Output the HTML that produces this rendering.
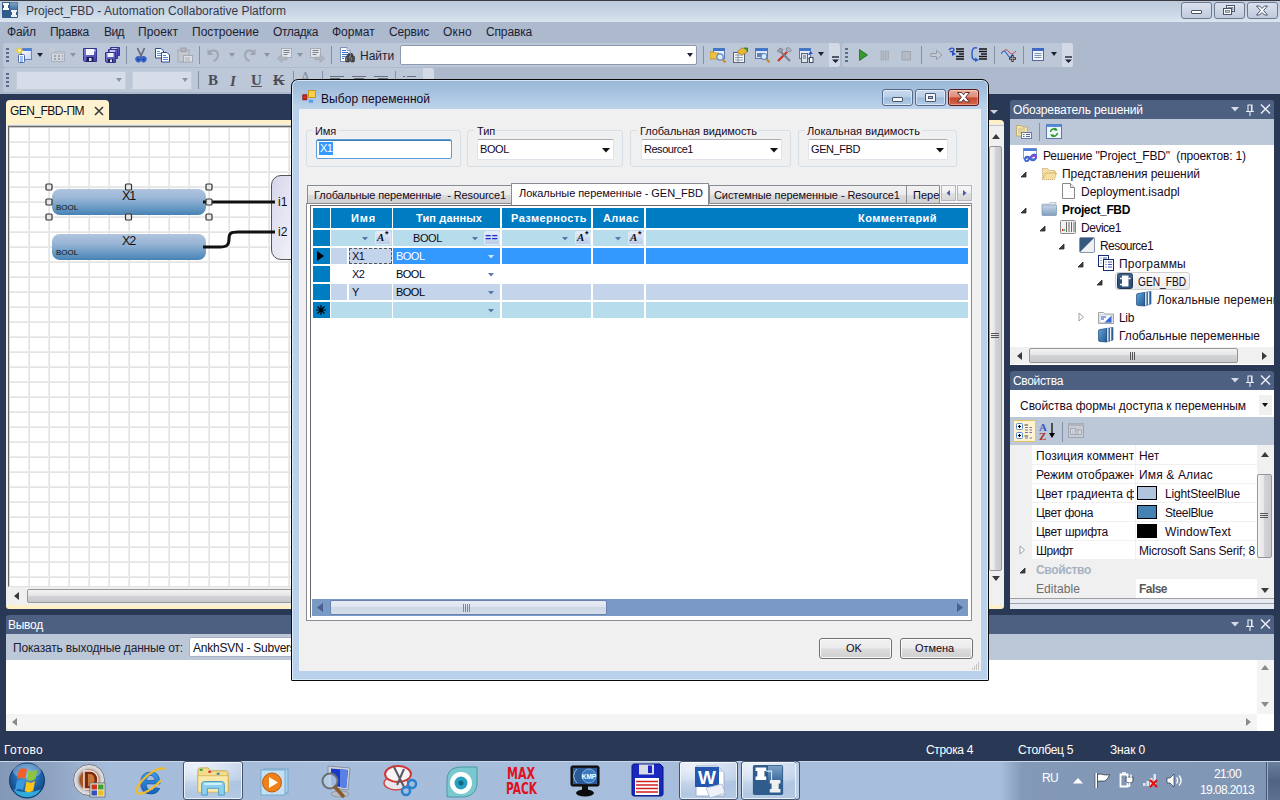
<!DOCTYPE html>
<html lang="ru">
<head>
<meta charset="utf-8">
<title>Project_FBD - Automation Collaborative Platform</title>
<style>
*{box-sizing:border-box;margin:0;padding:0}
html,body{width:1280px;height:800px;overflow:hidden}
body{position:relative;background:#293955;font-family:"Liberation Sans","DejaVu Sans",sans-serif;font-size:12px;color:#000}
.a{position:absolute}
.t{position:absolute;white-space:pre;line-height:1}
/* ---- main window chrome ---- */
#titlebar{left:0;top:0;width:1280px;height:22px;background:linear-gradient(#bccadb 0,#c8d4e3 50%,#dae5f1 100%);border-top:1px solid #3a3a40}
#menubar{left:0;top:22px;width:1280px;height:72px;background:#adb9cd}
.tb{background:#bcc7d8;border-radius:3px}
.wbtn{border:1px solid #6d7a90;border-radius:3px;background:linear-gradient(#dbe2ee,#bfcadb);height:17px;width:31px;top:2px}
.sep{width:1px;background:#8591a8}
.mi{top:26px;font-size:12px;color:#1b2234}

.grip{width:3px;height:15px;background:repeating-linear-gradient(#5a6a8a 0,#5a6a8a 2px,transparent 2px,transparent 4px)}
.dd{width:0;height:0;border-left:3.5px solid transparent;border-right:3.5px solid transparent;border-top:4px solid #1b2234}
.dd.g{border-top-color:#8c94a3}
.ovf{background:#d3dae6;border-radius:0 3px 3px 0}
.combo{background:#d7dde8;border:1px solid #c5cddb;border-radius:1px}
.ic{position:absolute;width:16px;height:16px}
.blk{width:154px;height:26px;border-radius:8px;background:linear-gradient(#b0c4de 0,#9ab6d6 35%,#6d9cc6 70%,#4682b4 100%)}
/* ---- panels ---- */
.ptitle{background:#4d6082;color:#fff;height:19px}
.white{background:#fff}
</style>
</head>
<body>
<!-- TITLE BAR -->
<div id="titlebar" class="a"></div>
<div class="t" style="left:26px;top:5px;font-size:12px;color:#33394d">Project_FBD - Automation Collaborative Platform</div>
<!-- MENU + TOOLBARS -->
<div id="menubar" class="a"></div>
<div id="menu"><div class="t mi" style="left:7px;letter-spacing:-0.13px">Файл</div><div class="t mi" style="left:50px;letter-spacing:-0.26px">Правка</div><div class="t mi" style="left:104px;letter-spacing:-0.57px">Вид</div><div class="t mi" style="left:138px;letter-spacing:0.08px">Проект</div><div class="t mi" style="left:192px">Построение</div><div class="t mi" style="left:273px;letter-spacing:-0.35px">Отладка</div><div class="t mi" style="left:332px">Формат</div><div class="t mi" style="left:389px;letter-spacing:-0.18px">Сервис</div><div class="t mi" style="left:443px;letter-spacing:0.28px">Окно</div><div class="t mi" style="left:486px;letter-spacing:-0.15px">Справка</div></div>

<div class="a tb" style="left:3px;top:43px;width:837px;height:24px"></div>
<div class="a ovf" style="left:829px;top:43px;width:11px;height:24px"></div>
<div class="a tb" style="left:842px;top:43px;width:231px;height:24px"></div>
<div class="a ovf" style="left:1062px;top:43px;width:11px;height:24px"></div>
<div class="a tb" style="left:3px;top:68px;width:431px;height:24px"></div>
<div class="a ovf" style="left:423px;top:68px;width:11px;height:24px"></div>
<div class="a grip" style="left:6px;top:48px"></div>
<div class="a grip" style="left:6px;top:73px"></div>
<div class="a grip" style="left:845px;top:48px"></div>
<!--ICONS1-->
<div class="a sep" style="left:126px;top:46px;height:18px"></div>
<div class="a sep" style="left:199px;top:46px;height:18px"></div>
<div class="a sep" style="left:331px;top:46px;height:18px"></div>
<div class="a sep" style="left:703px;top:46px;height:18px"></div>
<div class="a sep" style="left:921px;top:46px;height:18px"></div>
<div class="a sep" style="left:994px;top:46px;height:18px"></div>
<div class="a sep" style="left:1023px;top:46px;height:18px"></div>
<div class="a sep" style="left:198px;top:71px;height:18px"></div>
<div class="a sep" style="left:293px;top:71px;height:18px"></div>
<div class="a sep" style="left:322px;top:71px;height:18px"></div><div class="a sep" style="left:395px;top:71px;height:18px"></div>
<div class="a dd" style="left:37px;top:53px"></div>
<div class="a dd g" style="left:70px;top:53px"></div>
<div class="a dd g" style="left:229px;top:53px"></div>
<div class="a dd g" style="left:264px;top:53px"></div>
<div class="a dd g" style="left:297px;top:53px"></div>
<div class="a dd" style="left:818px;top:52px"></div>
<div class="a dd" style="left:1051px;top:52px"></div>
<div class="a combo" style="left:16px;top:71px;width:110px;height:19px"></div>
<div class="a dd g" style="left:116px;top:78px"></div>
<div class="a combo" style="left:132px;top:71px;width:60px;height:19px"></div>
<div class="a dd g" style="left:182px;top:78px"></div>
<div class="a white" style="left:400px;top:45px;width:297px;height:20px;border:1px solid #8d99b0;border-radius:2px"></div>
<div class="a dd" style="left:687px;top:53px"></div>
<div class="t" style="left:360px;top:50px;font-size:12px;color:#1b2234">Найти</div>
<div class="t" style="left:208px;top:72px;font:bold 15px 'Liberation Serif',serif;color:#4d4d55">B</div>
<div class="t" style="left:230px;top:73px;font:italic bold 15px 'Liberation Serif',serif;color:#4d4d55">I</div>
<div class="t" style="left:251px;top:72px;font:bold 15px 'Liberation Serif',serif;color:#4d4d55;text-decoration:underline">U</div>
<div class="t" style="left:273px;top:72px;font:bold 15px 'Liberation Serif',serif;color:#4d4d55;text-decoration:line-through">K</div>

<!-- toolbar icons -->
<svg class="ic" style="left:16px;top:47px" viewBox="0 0 16 16"><defs><linearGradient id="npw" x1="0" y1="0" x2="1" y2="1"><stop offset="0" stop-color="#fff"/><stop offset="1" stop-color="#c4d6f2"/></linearGradient><linearGradient id="svg1" x1="0" y1="0" x2="1" y2="1"><stop offset="0" stop-color="#8080dc"/><stop offset="1" stop-color="#4040a8"/></linearGradient></defs><rect x="5.5" y="1.5" width="10" height="11" fill="url(#npw)" stroke="#6a86b8"/><rect x="5.5" y="1.5" width="10" height="2.5" fill="#4a80e0"/><path d="M3.5 0v7.5M0 3.5h7M1 1l5 5M6 1l-5 5" stroke="#f6cc1c" stroke-width="1.3"/><circle cx="3.5" cy="3.5" r="1.5" fill="#fff6b0"/><rect x="2.5" y="7.5" width="6" height="8" rx="1" fill="#fff" stroke="#4a68a8"/><path d="M4 10h3M4 12h3M4 14h3" stroke="#4a80e0" stroke-width="1.2"/></svg>
<svg class="ic" style="left:49px;top:47px" viewBox="0 0 16 16"><rect x="2.5" y="4.5" width="13" height="10" fill="#d2d6dd" stroke="#a9afba"/><rect x="2.5" y="4.5" width="13" height="2.5" fill="#bcc2cc"/><path d="M5 9h2M9 9h2M13 9h1M5 12h2M9 12h2M13 12h1" stroke="#8e95a2" stroke-width="1.5"/><path d="M3 0v6M0 3h6M1 1l4 4M5 1l-4 4" stroke="#c9ccd2" stroke-width="1"/></svg>
<svg class="ic" style="left:82px;top:47px" viewBox="0 0 16 16"><path d="M1.5 1.5h13v13h-12l-1-1z" fill="url(#svg1)" stroke="#34348c"/><rect x="4" y="2" width="8" height="6" fill="#f4f6fc"/><rect x="12" y="2.5" width="1.5" height="2" fill="#c8c8f0"/><rect x="4.5" y="10" width="7" height="4.5" fill="#1c1c50"/><rect x="7" y="11" width="2.5" height="3" fill="#dcdcf0"/></svg>
<svg class="ic" style="left:104px;top:47px" viewBox="0 0 16 16"><path d="M6.5 .5h9v8h-9z" fill="url(#svg1)" stroke="#34348c"/><path d="M8 2h5" stroke="#e8e8fa" stroke-width="1.4"/><path d="M4.5 2.5h9v9h-9z" fill="url(#svg1)" stroke="#34348c"/><path d="M6 4h5" stroke="#e8e8fa" stroke-width="1.4"/><path d="M1.5 5.5h10v10h-9l-1-1z" fill="url(#svg1)" stroke="#34348c"/><rect x="3.5" y="6" width="6" height="4" fill="#f0f2fa"/><rect x="4" y="12" width="5" height="3" fill="#1c1c50"/><rect x="6" y="12.5" width="2" height="2.5" fill="#dcdcf0"/></svg>
<svg class="ic" style="left:133px;top:47px" viewBox="0 0 16 16"><path d="M4.5 1l4.5 10M11.5 1l-4.5 10" stroke="#6a6f7c" stroke-width="1.8" fill="none"/><ellipse cx="5.3" cy="12.3" rx="2.6" ry="2.9" fill="#3a6cdc" stroke="#2850b0" stroke-width=".6" transform="rotate(-20 5.3 12.3)"/><ellipse cx="10.7" cy="12.3" rx="2.6" ry="2.9" fill="#3a6cdc" stroke="#2850b0" stroke-width=".6" transform="rotate(20 10.7 12.3)"/><circle cx="5.3" cy="12.6" r="1" fill="#16307a"/><circle cx="10.7" cy="12.6" r="1" fill="#16307a"/></svg>
<svg class="ic" style="left:155px;top:47px" viewBox="0 0 16 16"><path d="M.5 1.5h5.5l2.5 2.5v7h-8z" fill="#fff" stroke="#2a4a9a"/><path d="M2 4.5h3M2 6.5h5M2 8.5h4" stroke="#5a90e0"/><path d="M6.5 5.5h5.5l2.5 2.5v7h-8z" fill="#fff" stroke="#2a4a9a"/><path d="M8 8.5h3M8 10.5h5M8 12.5h5" stroke="#4a80e0"/></svg>
<svg class="ic" style="left:177px;top:47px" viewBox="0 0 16 16"><rect x="1" y="3" width="11" height="12" fill="#c4c7ce" stroke="#a4a8b2"/><rect x="4" y="1" width="5" height="3.5" fill="#b4b8c0" stroke="#9a9ea8"/><rect x="6.5" y="8.5" width="9" height="6.5" fill="#dcdfe4" stroke="#a4a8b2"/><path d="M8 11h5M8 13h5" stroke="#aab"/></svg>
<svg class="ic" style="left:206px;top:47px" viewBox="0 0 16 16"><path d="M3 5.5c3-3.5 9-2.5 9 2.5c0 3-2 5-4.5 6" fill="none" stroke="#a0a6b2" stroke-width="2"/><path d="M1.5 2v6h6z" fill="#a0a6b2"/></svg>
<svg class="ic" style="left:241px;top:47px" viewBox="0 0 16 16"><path d="M13 5.5c-3-3.5-9-2.5-9 2.5c0 3 2 5 4.5 6" fill="none" stroke="#a0a6b2" stroke-width="2"/><path d="M14.5 2v6h-6z" fill="#a0a6b2"/></svg>
<svg class="ic" style="left:277px;top:47px" viewBox="0 0 16 16"><rect x="4.5" y="1.5" width="10" height="9" fill="#e2e5ea" stroke="#a8adb8"/><path d="M6.5 3.5h6M6.5 5.5h6M6.5 7.5h4" stroke="#7d8390"/><path d="M0 11.5l5-4v2.5h5v3h-5v2.5z" fill="#aeb4c0" stroke="#9aa0ac" stroke-width=".5"/></svg>
<svg class="ic" style="left:309px;top:47px" viewBox="0 0 16 16"><rect x="1.5" y="1.5" width="10" height="9" fill="#e2e5ea" stroke="#a8adb8"/><path d="M3.5 3.5h6M3.5 5.5h6M3.5 7.5h4" stroke="#7d8390"/><path d="M16 11.5l-5-4v2.5h-5v3h5v2.5z" fill="#aeb4c0" stroke="#9aa0ac" stroke-width=".5"/></svg>
<svg class="ic" style="left:339px;top:47px" viewBox="0 0 16 16"><path d="M1.5 .5h6.5l3 3v11h-9.5z" fill="#fff" stroke="#7a90b8"/><path d="M8 .5v3h3" fill="#e4ecf8" stroke="#7a90b8" stroke-width=".8"/><path d="M3 3.5h4M3 5.5h6M3 7.5h6M3 9.5h3M3 11.5h2" stroke="#3d74e0"/><path d="M8.5 9l.8-2.5h1.2v2.5M12 9v-2.5h1.2l.8 2.5" fill="#555" stroke="#333" stroke-width=".8"/><rect x="6.5" y="9" width="4" height="6" rx="1.3" fill="#4a4a4a" stroke="#2a2a2a" stroke-width=".6"/><rect x="11.5" y="9" width="4" height="6" rx="1.3" fill="#4a4a4a" stroke="#2a2a2a" stroke-width=".6"/><rect x="10.2" y="9.5" width="1.6" height="2" fill="#777"/><path d="M7.5 10.5v3M12.5 10.5v3" stroke="#8a8a8a" stroke-width=".8"/></svg>
<!-- right group of tb1 -->
<svg class="ic" style="left:710px;top:47px" viewBox="0 0 16 16"><rect x="3.5" y="1.5" width="11" height="10" fill="#e8eef8" stroke="#5a78a8"/><rect x="3.5" y="1.5" width="11" height="2.5" fill="#3d74d0"/><path d="M0 5h4l1 1h4v6h-9z" fill="#f0c040" stroke="#b88a18" stroke-width=".7"/><circle cx="10" cy="10" r="3.2" fill="#d8ecfa" stroke="#5a8ac8" stroke-width="1.2"/><path d="M12.5 12.5l3 3" stroke="#c88a30" stroke-width="2"/></svg>
<svg class="ic" style="left:732px;top:47px" viewBox="0 0 16 16"><rect x="1.5" y="5.5" width="11" height="10" fill="#f4f6fa" stroke="#5a6478"/><path d="M3 8h8M3 10.5h8M3 13h8M6 6v9" stroke="#7a869a" stroke-width=".8"/><path d="M5 5l5-4 5 1-1 4-4 2z" fill="#e8b830" stroke="#a87c10" stroke-width=".7"/><path d="M12 1h3.5v4" fill="#4aa040" stroke="#2a7020" stroke-width=".8"/></svg>
<svg class="ic" style="left:754px;top:47px" viewBox="0 0 16 16"><rect x="1.5" y="1.5" width="12" height="10" fill="#dfe8f6" stroke="#5a78a8"/><rect x="1.5" y="1.5" width="12" height="2.5" fill="#3d74d0"/><path d="M3 7h7M3 9h5" stroke="#3d5f9a" stroke-width="1.3"/><circle cx="10" cy="9.5" r="3" fill="#d8ecfa" stroke="#5a8ac8" stroke-width="1.2"/><path d="M12.5 12l3 3.5" stroke="#c88a30" stroke-width="2"/></svg>
<svg class="ic" style="left:776px;top:47px" viewBox="0 0 16 16"><path d="M2 14l9-9" stroke="#d03020" stroke-width="2.2"/><path d="M14 14l-9-9" stroke="#7a7f8a" stroke-width="2"/><path d="M1 4l3-3 3 1.5-1 2-2 1z" fill="#9aa0ac" stroke="#6a707c" stroke-width=".6"/><path d="M10 1.5l3-1 2.5 3-2 1.5-3-1.5z" fill="#b0b6c0" stroke="#6a707c" stroke-width=".6"/></svg>
<svg class="ic" style="left:798px;top:47px" viewBox="0 0 16 16"><rect x="1.5" y="1.5" width="11" height="10" fill="#e8eef8" stroke="#5a78a8"/><rect x="1.5" y="1.5" width="11" height="2.5" fill="#3d74d0"/><rect x="3.5" y="6.5" width="6" height="9" fill="#dfe3ea" stroke="#5a6478"/><path d="M5 9h3M5 11h3" stroke="#5a6478"/><rect x="11.5" y="10.5" width="3.5" height="5" fill="#fff" stroke="#3d4a68"/><path d="M11 8c0-3 3-3 3-1" fill="none" stroke="#2040c0" stroke-width="1.3"/></svg>
<!-- debug group -->
<svg class="ic" style="left:856px;top:47px" viewBox="0 0 16 16"><path d="M3.5 2.5l8 5.5-8 5.5z" fill="#3a9a30" stroke="#1f6a1a" stroke-width=".8"/></svg>
<svg class="ic" style="left:877px;top:47px" viewBox="0 0 16 16"><rect x="4" y="4" width="3" height="9" fill="#b4b9c4" stroke="#9aa0ac" stroke-width=".6"/><rect x="8.5" y="4" width="3" height="9" fill="#b4b9c4" stroke="#9aa0ac" stroke-width=".6"/></svg>
<svg class="ic" style="left:898px;top:47px" viewBox="0 0 16 16"><rect x="4" y="4.5" width="8.5" height="8.5" fill="#b4b9c4" stroke="#9aa0ac" stroke-width=".8"/></svg>
<svg class="ic" style="left:928px;top:47px" viewBox="0 0 16 16"><path d="M3 6.5h5.5v-3l5.5 4.5-5.5 4.5v-3h-5.5z" fill="#c6cbd4" stroke="#8e95a2" stroke-width=".9"/></svg>
<svg class="ic" style="left:948px;top:46px" viewBox="0 0 16 16"><path d="M8 3h8M8 5.5h8M11 8h5M8 10.5h8M8 13h8" stroke="#15151a" stroke-width="1.3"/><path d="M1 4c2-3 5-2 5 0s-3 1-4 2" fill="none" stroke="#2a50c0" stroke-width="1.4"/><path d="M4 5l4 3-4 2z" fill="#2a50c0"/></svg>
<svg class="ic" style="left:971px;top:46px" viewBox="0 0 16 16"><path d="M8 3h8M8 5.5h8M10 8h6M8 10.5h8M8 13h8" stroke="#15151a" stroke-width="1.3"/><path d="M6 2c-5-1-5 3-5 6s0 6 4 6" fill="none" stroke="#2a60c8" stroke-width="1.5"/><path d="M4 11.5l4 2.5-4 2z" fill="#2a60c8"/></svg>
<svg class="ic" style="left:1001px;top:47px" viewBox="0 0 16 16"><path d="M0 7c2-4 4-4 6 0s4 4 6 0" fill="none" stroke="#3070d0" stroke-width="1.2"/><path d="M2 5c2-3 4-3 6 0s4 2 7-1" fill="none" stroke="#d04040" stroke-width="1"/><path d="M11.5 8v7M8 11.5h7" stroke="#3a3a3a" stroke-width="2.4"/><path d="M11.5 9v5M9 11.5h5" stroke="#9a9a9a" stroke-width="1"/></svg>
<svg class="ic" style="left:1030px;top:47px" viewBox="0 0 16 16"><rect x="2.5" y="1.5" width="11" height="12" fill="#f2f5fb" stroke="#5068a8"/><rect x="2.5" y="1.5" width="11" height="2.5" fill="#3d68d0"/><path d="M4.5 6.5h7M4.5 8.5h7M4.5 10.5h7" stroke="#8090b8"/></svg>
<!-- overflow chevrons -->
<svg class="a" style="left:832px;top:56px" width="7" height="8" viewBox="0 0 7 8"><path d="M0 1h7" stroke="#1b2234" stroke-width="1.4"/><path d="M0 3.5h7l-3.5 3.5z" fill="#1b2234"/></svg>
<svg class="a" style="left:1065px;top:56px" width="7" height="8" viewBox="0 0 7 8"><path d="M0 1h7" stroke="#1b2234" stroke-width="1.4"/><path d="M0 3.5h7l-3.5 3.5z" fill="#1b2234"/></svg>
<!-- tb2 icons partially visible -->
<div class="t" style="left:300px;top:69px;font:15px 'Liberation Serif',serif;color:#8c92a0">A</div>
<svg class="a" style="left:329px;top:72px" width="90" height="8" viewBox="0 0 90 8"><path d="M1 4.5h14M1 6.5h10M23 4.5h14M25 6.5h10M45 4.5h14M49 6.5h10" stroke="#6a6f7c" stroke-width="1"/><path d="M74 4.5h2M78 4.5h9" stroke="#6a6f7c"/></svg>
<!-- app icon -->
<svg class="a" style="left:2px;top:2px" width="16" height="16" viewBox="0 0 16 16"><defs><linearGradient id="agi" x1="0" y1="0" x2="0" y2="1"><stop offset="0" stop-color="#7fa3c8"/><stop offset="1" stop-color="#3f6ea0"/></linearGradient></defs><rect width="16" height="16" rx="1" fill="#2f5c8c"/><rect x="8" y="0.5" width="7.5" height="7.5" fill="url(#agi)"/><path d="M1 1h6v2h-1v3h1v2h-6v-2h1v-3h-1z" fill="#fff"/><path d="M9 8h6v2h-1v3h1v2h-6v-2h1v-3h-1z" fill="#f0f0f0"/></svg>
<!-- window buttons -->
<div class="a wbtn" style="left:1181px"></div>
<div class="a wbtn" style="left:1214px"></div>
<div class="a wbtn" style="left:1247px"></div>
<div class="a" style="left:1191px;top:10px;width:11px;height:4px;background:#fff;border:1px solid #4a5468;border-radius:1px"></div>
<svg class="a" style="left:1222px;top:4px" width="14" height="12" viewBox="0 0 14 12"><rect x="4.5" y="1.5" width="8" height="6" fill="#fff" stroke="#4a5468"/><rect x="6" y="3.5" width="5" height="2.5" fill="#c3cddc" stroke="#4a5468" stroke-width=".6"/><rect x="1.5" y="4.5" width="8" height="6" fill="#fff" stroke="#4a5468"/><rect x="3.5" y="6.5" width="4" height="2" fill="#c3cddc" stroke="#4a5468" stroke-width=".6"/></svg>
<svg class="a" style="left:1255px;top:5px" width="14" height="11" viewBox="0 0 14 11"><path d="M1.5 1h3l2.5 2.5 2.5-2.5h3l-4 4.5 4 4.5h-3l-2.5-2.5-2.5 2.5h-3l4-4.5z" fill="#fff" stroke="#4a5468" stroke-width="1"/></svg>
<!-- DOCUMENT AREA -->
<div class="a" style="left:6px;top:100px;width:103px;height:22px;background:#fff2d0;border-radius:4px 4px 0 0"></div>
<div class="t" style="left:10px;top:105px;font-size:12px;letter-spacing:-0.53px;color:#10101c">GEN_FBD-ПМ</div>
<svg class="a" style="left:94px;top:106px" width="10" height="10" viewBox="0 0 10 10"><path d="M1 1l8 8M9 1l-8 8" stroke="#3a3a40" stroke-width="1.6"/></svg>
<div class="a" style="left:6px;top:120px;width:998px;height:489px;background:#fff0c8;border-radius:0 4px 3px 3px"></div>
<div class="a" style="left:6px;top:124px;width:998px;height:481px;background:#ededed"></div><div class="a" style="left:8px;top:125px;width:996px;height:1px;background:#c4c4c4"></div>
<div class="a" id="canvas" style="left:8px;top:126px;width:982px;height:461px;border:1px solid #696969;border-right-color:#e3e3e3;border-bottom-color:#e3e3e3;box-shadow:inset 0 1px 0 #c9c9c9,inset 1px 0 0 #d4d4d4;background-color:#fff;background-image:linear-gradient(90deg,#ebebeb 0,#ebebeb 1px,#e4e4e4 1px,#e4e4e4 2px,transparent 2px),linear-gradient(#ebebeb 0,#ebebeb 1px,#e4e4e4 1px,#e4e4e4 2px,transparent 2px);background-size:20px 15px;background-position:19px 14px"></div>
<svg class="a" style="left:990px;top:110px" width="8" height="4" viewBox="0 0 8 4"><path d="M0 0h8l-4 4z" fill="#ced4df"/></svg>
<!-- FBD blocks -->
<div class="a blk" style="left:52px;top:189px"></div>
<div class="a blk" style="left:52px;top:234px"></div>
<div class="t" style="left:122px;top:190px;font-size:12.5px;letter-spacing:-1.2px;color:#111">X1</div>
<div class="t" style="left:122px;top:235px;font-size:12.5px;letter-spacing:-1.2px;color:#111">X2</div>
<div class="t" style="left:56px;top:204px;font-size:8px;color:#111">BOOL</div>
<div class="t" style="left:56px;top:249px;font-size:8px;color:#111">BOOL</div>
<svg class="a" style="left:40px;top:170px" width="260" height="100" viewBox="40 170 260 100"><defs><linearGradient id="fbg" x1="0" y1="0" x2="1" y2="1"><stop offset="0" stop-color="#d6d6ec"/><stop offset="1" stop-color="#f6f6fb"/></linearGradient></defs>
<path d="M300 175.5h-19a9.5 9.5 0 0 0-9.5 9.5v65a9.5 9.5 0 0 0 9.5 9.5h19" fill="url(#fbg)" stroke="#555" stroke-width="1"/>
<path d="M203 202H275" stroke="#111" stroke-width="3" fill="none"/>
<path d="M203 247h17c7 0 9-2 9-8s2-7 9-7h37" stroke="#111" stroke-width="3" fill="none"/>
<g fill="#e8e8e8" stroke="#333" stroke-width="1.2"><rect x="46" y="184" width="6" height="6" rx="1"/><rect x="125.5" y="184" width="6" height="6" rx="1"/><rect x="206" y="184" width="6" height="6" rx="1"/><rect x="46" y="199" width="6" height="6" rx="1"/><rect x="206" y="199" width="6" height="6" rx="1"/><rect x="46" y="214" width="6" height="6" rx="1"/><rect x="125.5" y="214" width="6" height="6" rx="1"/><rect x="206" y="214" width="6" height="6" rx="1"/></g>
</svg>
<div class="t" style="left:278px;top:196px;font-size:12px;color:#111">i1</div>
<div class="t" style="left:278px;top:226px;font-size:12px;color:#111">i2</div>
<!-- scrollbars of doc -->
<div class="a" style="left:9px;top:588px;width:981px;height:17px;background:#f0f0f0"></div>
<div class="a" style="left:27px;top:589px;width:960px;height:14px;border:1px solid #979797;border-radius:2px;background:linear-gradient(#f3f3f3 0,#e6e6e8 45%,#d2d3d6 50%,#c8c9cd 100%)"></div>
<svg class="a" style="left:14px;top:592px" width="5" height="8" viewBox="0 0 5 8"><path d="M5 0v8l-5-4z" fill="#3a3a3a"/></svg>
<div class="a" style="left:989px;top:126px;width:15px;height:479px;background:#f0f0f0"></div>
<div class="a" style="left:989px;top:146px;width:13px;height:425px;border:1px solid #979797;border-radius:2px;background:linear-gradient(90deg,#f3f3f3 0,#e6e6e8 45%,#d2d3d6 50%,#c8c9cd 100%)"></div>
<svg class="a" style="left:992px;top:134px" width="8" height="5" viewBox="0 0 8 5"><path d="M0 5h8l-4-5z" fill="#3a3a3a"/></svg>
<svg class="a" style="left:992px;top:576px" width="8" height="5" viewBox="0 0 8 5"><path d="M0 0h8l-4 5z" fill="#3a3a3a"/></svg>
<svg class="a" style="left:991px;top:332px" width="8" height="8" viewBox="0 0 8 8"><path d="M0 1.5h8M0 3.5h8M0 5.5h8" stroke="#555" stroke-width="1"/></svg>
<!-- RIGHT PANELS -->
<div class="a ptitle" style="left:1010px;top:100px;width:264px;border-radius:3px 3px 0 0"></div>
<div class="t" style='left:1013px;top:104px;color:#fff;letter-spacing:-0.11px'>Обозреватель решений</div>
<svg class="a" style="left:1231px;top:103px" width="42" height="14" viewBox="0 0 42 14"><path d="M0 4h8l-4 4.5z" fill="#d6dbe6"/><path d="M15 8.5h8M17 8v-6h4v6M20.5 2v6M19 9v4" stroke="#e8ecf4" stroke-width="1.1" fill="none"/><path d="M30 1.5l9 9M39 1.5l-9 9" stroke="#e8ecf4" stroke-width="1.5"/></svg>
<div class="a" style="left:1010px;top:119px;width:264px;height:26px;background:#bcc7d8"></div>
<div class="a white" style="left:1010px;top:145px;width:264px;height:220px"></div>
<svg class="a" style="left:1016px;top:123px" width="18" height="18" viewBox="0 0 18 18"><path d="M.5 2.5h5l1 1.5h5v9h-11z" fill="#f3e3a8" stroke="#b9a66a" stroke-width=".8"/><path d="M2 6h7M2 8h7M2 10h4" stroke="#c0b48a" stroke-width=".8"/><rect x="5.5" y="9.5" width="10" height="6" fill="#f4f6fb" stroke="#6b7ba6"/><path d="M7 11.5h1.5M10 11.5h4M7 13.5h1.5M10 13.5h4" stroke="#5a6a96"/></svg>
<div class="a sep" style="left:1039px;top:123px;height:18px"></div>
<svg class="a" style="left:1046px;top:124px" width="17" height="16" viewBox="0 0 17 16"><rect x=".5" y=".5" width="15" height="14" fill="#f0f4fb" stroke="#5a78a8"/><rect x=".5" y=".5" width="15" height="2.5" fill="#5a8ae0"/><path d="M4.5 8a3.5 3.5 0 0 1 6-2M11.5 9a3.5 3.5 0 0 1-6 2" fill="none" stroke="#2f9a2a" stroke-width="1.6"/><path d="M9.5 3.5l2.5 3h-4zM6.5 13.5l-2.5-3h4z" fill="#2f9a2a"/></svg>
<svg class="ic" style="left:1022px;top:147px" viewBox="0 0 16 16"><rect x="1.5" y="1.5" width="13" height="10" fill="#fff" stroke="#8a9cc0"/><rect x="1.5" y="1.5" width="13" height="2.5" fill="#4a7ee0"/><path d="M3 12.5c0-4 4-3 5-1s5 3 6-1-3-4-5-1-2 3-3 4-3 1-3-1z" fill="none" stroke="#3a66d8" stroke-width="1.8"/><path d="M9 11c1-3 5-3 5 0" fill="none" stroke="#8a4ad0" stroke-width="1.8"/></svg>
<div class="t" style='left:1043px;top:150px;color:#1a0a20;letter-spacing:-0.16px'>Решение "Project_FBD"  (проектов: 1)</div>
<svg class="a" style="left:1020px;top:171px" width="7" height="7" viewBox="0 0 7 7"><path d="M6 1v5h-5z" fill="#404040" stroke="#262626" stroke-width=".8"/></svg>
<svg class="ic" style="left:1041px;top:165px" viewBox="0 0 16 16"><path d="M1.5 3.5h5l1.5 2h6v2.5h1.5l-2 6.5h-12z" fill="#f6dfa0" stroke="#b0955a" stroke-width=".9" stroke-dasharray="1 1"/><path d="M2 13.5l2.5-5.5h11" fill="none" stroke="#c8a860" stroke-width=".8"/></svg>
<div class="t" style='left:1062px;top:168px;color:#1a0a20;letter-spacing:-0.07px'>Представления решений</div>
<svg class="ic" style="left:1061px;top:183px" viewBox="0 0 16 16"><path d="M1.5 .5h8l4 4v11h-12z" fill="#fdfdfd" stroke="#8a8a8a"/><path d="M9.5 .5v4h4" fill="#eee" stroke="#8a8a8a"/></svg>
<div class="t" style='left:1081px;top:186px;color:#1a0a20'>Deployment.isadpl</div>
<svg class="a" style="left:1020px;top:207px" width="7" height="7" viewBox="0 0 7 7"><path d="M6 1v5h-5z" fill="#404040" stroke="#262626" stroke-width=".8"/></svg>
<svg class="ic" style="left:1041px;top:201px" viewBox="0 0 16 16"><defs><linearGradient id="pg1" x1="0" y1="0" x2="0" y2="1"><stop offset="0" stop-color="#c9d8e8"/><stop offset="1" stop-color="#7f9fc0"/></linearGradient></defs><path d="M1 3h7l1-1.5h6v3.5h-14z" fill="#e4e8ee" stroke="#a8b0bc" stroke-width=".6"/><rect x="1" y="4" width="14.5" height="10.5" rx="1" fill="url(#pg1)" stroke="#7890b0" stroke-width=".7"/></svg>
<div class="t" style='left:1062px;top:204px;font-weight:700;letter-spacing:-0.37px'>Project_FBD</div>
<svg class="a" style="left:1039px;top:225px" width="7" height="7" viewBox="0 0 7 7"><path d="M6 1v5h-5z" fill="#404040" stroke="#262626" stroke-width=".8"/></svg>
<svg class="ic" style="left:1060px;top:219px" viewBox="0 0 16 16"><rect x=".5" y="1.5" width="15" height="13" rx="1" fill="#f2f2f2" stroke="#8a8a8a"/><path d="M6.5 3v10M9 3v10M11.5 3v10M14 3v10" stroke="#6a6a6a" stroke-width="1"/><rect x="2" y="10" width="1.2" height="2" fill="#d03020"/><rect x="3.5" y="10" width="1.2" height="2" fill="#30a030"/></svg>
<div class="t" style='left:1081px;top:222px;color:#1a0a20;letter-spacing:-0.48px'>Device1</div>
<svg class="a" style="left:1058px;top:243px" width="7" height="7" viewBox="0 0 7 7"><path d="M6 1v5h-5z" fill="#404040" stroke="#262626" stroke-width=".8"/></svg>
<svg class="ic" style="left:1079px;top:237px" viewBox="0 0 16 16"><rect x=".5" y=".5" width="15" height="15" rx="1.5" fill="#eef0f4" stroke="#8a94a8"/><path d="M1 1h14l-14 14z" fill="#34587e"/></svg>
<div class="t" style='left:1100px;top:240px;color:#1a0a20;letter-spacing:-0.56px'>Resource1</div>
<svg class="a" style="left:1077px;top:261px" width="7" height="7" viewBox="0 0 7 7"><path d="M6 1v5h-5z" fill="#404040" stroke="#262626" stroke-width=".8"/></svg>
<svg class="ic" style="left:1098px;top:255px" viewBox="0 0 16 16"><rect x=".5" y=".5" width="10" height="11" fill="#fff" stroke="#1a2a6a"/><path d="M2.5 3h1M5 3h4M2.5 5.5h1M5 5.5h4M2.5 8h1" stroke="#3a5ac0"/><rect x="5.5" y="4.5" width="10" height="11" fill="#fff" stroke="#1a2a6a"/><path d="M7.5 7h1M10 7h4M7.5 9.5h1M10 9.5h4M7.5 12h1M10 12h4" stroke="#3a5ac0"/></svg>
<div class="t" style='left:1119px;top:258px;color:#1a0a20;letter-spacing:0.24px'>Программы</div>
<div class="a" style="left:1115px;top:272px;width:75px;height:18px;border:1px solid #d0d0d0;border-radius:3px;background:linear-gradient(#fafafa,#eaeaea)"></div>
<svg class="a" style="left:1096px;top:279px" width="7" height="7" viewBox="0 0 7 7"><path d="M6 1v5h-5z" fill="#404040" stroke="#262626" stroke-width=".8"/></svg>
<svg class="ic" style="left:1117px;top:273px" viewBox="0 0 16 16"><rect x=".5" y=".5" width="15" height="15" rx="2" fill="#2d4f78" stroke="#1d3658"/><path d="M0 .5h16v5h-16z" fill="#4a6c94" opacity=".5"/><rect x="5" y="2.5" width="6.5" height="11" fill="#fff"/><path d="M3 5.5h2M3 11.5h2M11.5 5.5h2" stroke="#fff" stroke-width="1.6"/></svg>
<div class="t" style='left:1138px;top:276px;color:#1a0a20;transform:scaleX(0.847);transform-origin:0 0'>GEN_FBD</div>
<svg class="ic" style="left:1136px;top:291px" viewBox="0 0 16 16"><defs><linearGradient id="vg1" x1="0" y1="0" x2="1" y2="1"><stop offset="0" stop-color="#62a4dc"/><stop offset="1" stop-color="#235a92"/></linearGradient></defs><path d="M8.5 1.5l6.5-1v12.5l-6.5 2z" fill="#2f6aa6" stroke="#1f4a78" stroke-width=".6"/><path d="M9.8 1.300000v13.300000M12.6 .9v12.8" stroke="#eef4fa" stroke-width="1.300000"/><path d="M2 2.5l6.5-1v13.5l-6.5-.5a1.5 1.5 0 0 1-1.5-1.5v-9a1.5 1.5 0 0 1 1.5-1.5z" fill="url(#vg1)" stroke="#1f4a78" stroke-width=".7"/></svg>
<div class="t" style='left:1157px;top:294px;color:#1a0a20;letter-spacing:0.14px'>Локальные переменные</div>
<svg class="a" style="left:1078px;top:312px" width="7" height="10" viewBox="0 0 7 10"><path d="M1 1l4.5 4-4.5 4z" fill="#fff" stroke="#a0a0a0" stroke-width="1"/></svg>
<svg class="ic" style="left:1098px;top:309px" viewBox="0 0 16 16"><path d="M.5 3.5h5l1.5 1.5h8.5v9.5h-15z" fill="#eef0f3" stroke="#8a8f98" stroke-width=".8"/><rect x="2" y="6" width="12" height="7.5" fill="#fafbfd" stroke="#b0b6c0" stroke-width=".5"/><path d="M3 8h5M3 10h3" stroke="#2a4ac0" stroke-width="1.2"/><path d="M13.5 6.5v7h-7z" fill="#3a6ad8"/></svg>
<div class="t" style='left:1119px;top:312px;color:#1a0a20;letter-spacing:-0.34px'>Lib</div>
<svg class="ic" style="left:1098px;top:327px" viewBox="0 0 16 16"><defs><linearGradient id="vg2" x1="0" y1="0" x2="1" y2="1"><stop offset="0" stop-color="#62a4dc"/><stop offset="1" stop-color="#235a92"/></linearGradient></defs><path d="M8.5 1.5l6.5-1v12.5l-6.5 2z" fill="#2f6aa6" stroke="#1f4a78" stroke-width=".6"/><path d="M9.8 1.300000v13.300000M12.6 .9v12.8" stroke="#eef4fa" stroke-width="1.300000"/><path d="M2 2.5l6.5-1v13.5l-6.5-.5a1.5 1.5 0 0 1-1.5-1.5v-9a1.5 1.5 0 0 1 1.5-1.5z" fill="url(#vg2)" stroke="#1f4a78" stroke-width=".7"/></svg>
<div class="t" style='left:1119px;top:330px;color:#1a0a20;letter-spacing:-0.02px'>Глобальные переменные</div>
<div class="a" style="left:1274px;top:94px;width:6px;height:520px;background:#293955"></div>
<div class="a" style="left:1010px;top:347px;width:264px;height:17px;background:#f0f0f0"></div>
<div class="a" style="left:1029px;top:348px;width:209px;height:15px;border:1px solid #979797;border-radius:2px;background:linear-gradient(#f3f3f3 0,#e6e6e8 45%,#d2d3d6 50%,#c8c9cd 100%)"></div>
<svg class="a" style="left:1017px;top:352px" width="5" height="8" viewBox="0 0 5 8"><path d="M5 0v8l-5-4z" fill="#3a3a3a"/></svg>
<svg class="a" style="left:1262px;top:352px" width="5" height="8" viewBox="0 0 5 8"><path d="M0 0v8l5-4z" fill="#3a3a3a"/></svg>
<svg class="a" style="left:1129px;top:352px" width="8" height="8" viewBox="0 0 8 8"><path d="M1.5 0v8M3.5 0v8M5.5 0v8" stroke="#555" stroke-width="1"/></svg>
<div class="a ptitle" style="left:1010px;top:371px;width:264px;border-radius:3px 3px 0 0"></div>
<div class="t" style='left:1013px;top:375px;color:#fff;letter-spacing:-0.34px'>Свойства</div>
<svg class="a" style="left:1231px;top:374px" width="42" height="14" viewBox="0 0 42 14"><path d="M0 4h8l-4 4.5z" fill="#d6dbe6"/><path d="M15 8.5h8M17 8v-6h4v6M20.5 2v6M19 9v4" stroke="#e8ecf4" stroke-width="1.1" fill="none"/><path d="M30 1.5l9 9M39 1.5l-9 9" stroke="#e8ecf4" stroke-width="1.5"/></svg>
<div class="a white" style="left:1010px;top:390px;width:264px;height:27px"></div>
<div class="t" style='left:1020px;top:400px;color:#1a0a20;letter-spacing:-0.04px'>Свойства формы доступа к переменным</div>
<div class="a" style="left:1259px;top:395px;width:13px;height:20px;background:#f0f0f0"></div>
<div class="a dd" style="left:1262px;top:403px;border-top-color:#111"></div>
<div class="a" style="left:1010px;top:417px;width:264px;height:28px;background:#bcc7d8"></div>
<div class="a" style="left:1013px;top:420px;width:23px;height:22px;background:#fff2cf;border:1px solid #e5c365;border-radius:1px"></div>
<svg class="a" style="left:1016px;top:422px" width="18" height="18" viewBox="0 0 18 18"><rect x=".5" y="1.5" width="6" height="6" rx="1" fill="#fff" stroke="#5a8ad0"/><rect x=".5" y="10.5" width="6" height="6" rx="1" fill="#fff" stroke="#5a8ad0"/><path d="M2 4.5h3M3.5 3v3M2 13.5h3M3.5 12v3" stroke="#000" stroke-width="1.2"/><path d="M8.5 3h3.5M8.5 14h3.5" stroke="#444" stroke-width="1.2"/><path d="M9 5.5h3M13.5 5.5h2.5M9 8h3M13.5 8h2.5M9 10.5h3M13.5 10.5h2.5M9 16h3M13.5 16h2.5" stroke="#6a78c0" stroke-width="1"/></svg>
<div class="t" style='left:1039px;top:422px;font-size:11px;font-weight:700;color:#3a5ac8;font-family:"Liberation Serif",sans-serif'>A</div>
<div class="t" style='left:1039px;top:431px;font-size:11px;font-weight:700;color:#b03030;font-family:"Liberation Serif",sans-serif'>Z</div>
<svg class="a" style="left:1048px;top:422px" width="8" height="18" viewBox="0 0 8 18"><path d="M4 1v13" stroke="#000" stroke-width="1.2"/><path d="M1 11l3 5 3-5z" fill="#000"/></svg>
<div class="a sep" style="left:1062px;top:422px;height:20px"></div>
<svg class="a" style="left:1068px;top:423px" width="17" height="15" viewBox="0 0 17 15"><rect x=".5" y=".5" width="15" height="14" fill="#c8ccd4" stroke="#a0a4ac"/><rect x=".5" y=".5" width="15" height="2.5" fill="#b0b4bc"/><path d="M2.5 11.5v-6h5v1.5h6v4.5z" fill="#d6d9df" stroke="#9a9ea8" stroke-width=".8"/><path d="M4 8h1M6 8h5M4 10h1M6 10h5" stroke="#9a9ea8" stroke-width=".8"/></svg>
<div class="a" style="left:1010px;top:445px;width:264px;height:164px;background:#f0f0f0"></div>
<div class="a white" style="left:1032px;top:445px;width:225px;height:114px"></div>
<div class="a white" style="left:1136px;top:579px;width:121px;height:19px"></div>
<div class="t" style='left:1036px;top:450px;color:#1a0a20;width:98px;overflow:hidden'>Позиция комментария</div>
<div class="t" style='left:1139px;top:450px;color:#1a0a20;letter-spacing:-0.15px'>Нет</div>
<div class="a" style="left:1032px;top:464px;width:225px;height:1px;background:#f0f0f0"></div>
<div class="t" style='left:1036px;top:469px;color:#1a0a20;width:98px;overflow:hidden'>Режим отображения</div>
<div class="t" style='left:1139px;top:469px;color:#1a0a20;letter-spacing:0.14px'>Имя &amp; Алиас</div>
<div class="a" style="left:1032px;top:483px;width:225px;height:1px;background:#f0f0f0"></div>
<div class="t" style='left:1036px;top:488px;color:#1a0a20;width:98px;overflow:hidden'>Цвет градиента фона</div>
<div class="a" style="left:1137px;top:486px;width:20px;height:14px;background:#b0c4de;border:1px solid #000"></div>
<div class="t" style='left:1165px;top:488px;color:#1a0a20;letter-spacing:-0.17px'>LightSteelBlue</div>
<div class="a" style="left:1032px;top:502px;width:225px;height:1px;background:#f0f0f0"></div>
<div class="t" style='left:1036px;top:507px;color:#1a0a20;letter-spacing:-0.34px;width:98px;overflow:hidden'>Цвет фона</div>
<div class="a" style="left:1137px;top:505px;width:20px;height:14px;background:#4682b4;border:1px solid #000"></div>
<div class="t" style='left:1165px;top:507px;color:#1a0a20;letter-spacing:-0.38px'>SteelBlue</div>
<div class="a" style="left:1032px;top:521px;width:225px;height:1px;background:#f0f0f0"></div>
<div class="t" style='left:1036px;top:526px;color:#1a0a20;letter-spacing:-0.26px;width:98px;overflow:hidden'>Цвет шрифта</div>
<div class="a" style="left:1137px;top:524px;width:20px;height:14px;background:#000;border:1px solid #000"></div>
<div class="t" style='left:1165px;top:526px;color:#1a0a20;letter-spacing:0.13px'>WindowText</div>
<div class="a" style="left:1032px;top:540px;width:225px;height:1px;background:#f0f0f0"></div>
<div class="t" style='left:1036px;top:545px;color:#1a0a20;letter-spacing:-0.50px;width:98px;overflow:hidden'>Шрифт</div>
<div class="t" style='left:1139px;top:545px;color:#1a0a20;letter-spacing:-0.21px'>Microsoft Sans Serif; 8</div>
<div class="a" style="left:1032px;top:559px;width:225px;height:1px;background:#f0f0f0"></div>
<div class="a" style="left:1135px;top:445px;width:1px;height:114px;background:#f0f0f0"></div>
<svg class="a" style="left:1019px;top:545px" width="7" height="10" viewBox="0 0 7 10"><path d="M1 1l4.5 4-4.5 4z" fill="#fff" stroke="#a0a0a0" stroke-width="1"/></svg>
<svg class="a" style="left:1019px;top:567px" width="7" height="7" viewBox="0 0 7 7"><path d="M6 1v5h-5z" fill="#404040" stroke="#262626" stroke-width=".8"/></svg>
<div class="t" style='left:1036px;top:564px;font-weight:700;color:#a6b0c2;letter-spacing:-0.34px'>Свойство</div>
<div class="t" style='left:1036px;top:583px;color:#6d6d6d;letter-spacing:0.08px'>Editable</div>
<div class="t" style='left:1139px;top:583px;font-weight:700;color:#5a5a5a;letter-spacing:-0.54px'>False</div>
<div class="a" style="left:1257px;top:445px;width:17px;height:153px;background:#f0f0f0"></div>
<div class="a" style="left:1257px;top:474px;width:15px;height:84px;border:1px solid #979797;border-radius:2px;background:linear-gradient(90deg,#f3f3f3 0,#e6e6e8 45%,#d2d3d6 50%,#c8c9cd 100%)"></div>
<svg class="a" style="left:1261px;top:452px" width="8" height="5" viewBox="0 0 8 5"><path d="M0 5h8l-4-5z" fill="#3a3a3a"/></svg>
<svg class="a" style="left:1261px;top:588px" width="8" height="5" viewBox="0 0 8 5"><path d="M0 0h8l-4 5z" fill="#3a3a3a"/></svg>
<svg class="a" style="left:1260px;top:512px" width="8" height="8" viewBox="0 0 8 8"><path d="M0 1.5h8M0 3.5h8M0 5.5h8" stroke="#555" stroke-width="1"/></svg>
<div class="a" style="left:1010px;top:598px;width:264px;height:11px;background:#e6eaf2;border-top:1px solid #a0a0a0"></div>
<div class="a" style="left:1010px;top:603px;width:264px;height:1px;background:#a0a0a0"></div>
<!-- OUTPUT PANEL -->
<div class="a ptitle" style="left:6px;top:615px;width:1268px;border-radius:3px 3px 0 0"></div>
<div class="t" style='left:8px;top:619px;color:#fff;letter-spacing:-0.26px'>Вывод</div>
<svg class="a" style="left:1231px;top:618px" width="42" height="14" viewBox="0 0 42 14"><path d="M0 4h8l-4 4.5z" fill="#d6dbe6"/><path d="M15 8.5h8M17 8v-6h4v6M20.5 2v6M19 9v4" stroke="#e8ecf4" stroke-width="1.1" fill="none"/><path d="M30 1.5l9 9M39 1.5l-9 9" stroke="#e8ecf4" stroke-width="1.5"/></svg>
<div class="a" style="left:6px;top:634px;width:1268px;height:26px;background:#bcc7d8"></div>
<div class="t" style='left:13px;top:642px;color:#1b2234;letter-spacing:-0.17px'>Показать выходные данные от:</div>
<div class="a white" style="left:189px;top:637px;width:240px;height:20px;border:1px solid #a8b2c4;border-radius:2px"></div>
<div class="t" style='left:193px;top:642px;color:#101018;letter-spacing:-0.24px'>AnkhSVN - Subversion</div>
<div class="a white" style="left:6px;top:660px;width:1268px;height:54px"></div>
<div class="a" style="left:6px;top:714px;width:1268px;height:17px;background:#f4f4f4"></div>
<div class="a" style="left:1257px;top:660px;width:17px;height:54px;background:#f4f4f4"></div>
<div class="a" style="left:1257px;top:714px;width:17px;height:17px;background:#fff"></div>
<svg class="a" style="left:12px;top:718px" width="5" height="8" viewBox="0 0 5 8"><path d="M5 0v8l-5-4z" fill="#8a8a8a"/></svg>
<svg class="a" style="left:1246px;top:718px" width="5" height="8" viewBox="0 0 5 8"><path d="M0 0v8l5-4z" fill="#8a8a8a"/></svg>
<svg class="a" style="left:1261px;top:665px" width="8" height="5" viewBox="0 0 8 5"><path d="M0 5h8l-4-5z" fill="#8a8a8a"/></svg>
<svg class="a" style="left:1261px;top:702px" width="8" height="5" viewBox="0 0 8 5"><path d="M0 0h8l-4 5z" fill="#8a8a8a"/></svg>
<!-- STATUS BAR -->
<div class="t" style='left:4px;top:744px;color:#fff;letter-spacing:0.32px'>Готово</div>
<div class="t" style='left:926px;top:744px;color:#fff;letter-spacing:-0.34px'>Строка 4</div>
<div class="t" style='left:1018px;top:744px;color:#fff;letter-spacing:-0.30px'>Столбец 5</div>
<div class="t" style='left:1110px;top:744px;color:#fff;letter-spacing:-0.14px'>Знак 0</div>
<!-- TASKBAR -->
<div class="a" id="taskbar" style="left:0;top:761px;width:1280px;height:39px;background:linear-gradient(90deg,#8397b6 0,#8ea3c1 50px,#a5bddb 110px,#a7bfdd 1000px,#8499b8 1022px,#8096b5 1265px);border-top:1px solid #c9d6e8"></div>
<div class="a" style="left:1266px;top:762px;width:14px;height:38px;background:linear-gradient(#6a7f9c,#4f6482 50%,#5d7290);border-left:1px solid #44566f;box-shadow:inset 1px 0 0 #9db0c8"></div>
<div class="a" style="left:183px;top:761px;width:60px;height:39px;border:1px solid #44546e;border-radius:3px;background:radial-gradient(ellipse 50px 28px at 12px 4px,rgba(240,245,252,.9),rgba(240,245,252,0)),linear-gradient(#c9d8ec 0,#bccfe7 48%,#aec4e0 52%,#b4c9e3 100%);box-shadow:inset 0 0 0 1px rgba(255,255,255,.7)"></div>
<div class="a" style="left:679px;top:761px;width:59px;height:39px;border:1px solid #44546e;border-radius:3px;background:radial-gradient(ellipse 50px 28px at 12px 4px,rgba(240,245,252,.9),rgba(240,245,252,0)),linear-gradient(#c9d8ec 0,#bccfe7 48%,#aec4e0 52%,#b4c9e3 100%);box-shadow:inset 0 0 0 1px rgba(255,255,255,.7)"></div>
<div class="a" style="left:741px;top:761px;width:56px;height:39px;border:1px solid #44546e;border-radius:3px;background:radial-gradient(ellipse 50px 28px at 12px 4px,rgba(240,245,252,.9),rgba(240,245,252,0)),linear-gradient(#c9d8ec 0,#bccfe7 48%,#aec4e0 52%,#b4c9e3 100%);box-shadow:inset 0 0 0 1px rgba(255,255,255,.7)"></div>
<div class="a" style="left:796px;top:761px;width:4px;height:39px;border:1px solid #44546e;border-left:none;border-radius:0 3px 3px 0;background:#bccfe7"></div>
<svg class="a" style="left:7px;top:761px" width="40" height="39" viewBox="0 0 40 39"><defs><radialGradient id="orb" cx=".5" cy=".35" r=".7"><stop offset="0" stop-color="#5fa8e0"/><stop offset=".55" stop-color="#1f62a8"/><stop offset="1" stop-color="#0d3a70"/></radialGradient></defs><circle cx="20" cy="19.5" r="17.5" fill="url(#orb)" stroke="#123a66" stroke-width="1"/><path d="M6 28a16 16 0 0 0 28 0a17 7 0 0 1-28 0z" fill="#39c0f0" opacity=".8"/><ellipse cx="20" cy="10" rx="14" ry="7.5" fill="#fff" opacity=".28"/><g transform="translate(20 19) scale(1.08 1.3) translate(-19 -18.3)"><path d="M11.5 10.5c3-1.8 5-1.5 7.5-.3l-1.7 7.3c-2.5-1.2-4.5-1.4-7.5.3z" fill="#f0612a"/><path d="M20.5 10.8c2.5 1.2 5 1.2 8-.5l-1.7 7.3c-3 1.7-5.5 1.7-8 .5z" fill="#8cc63f"/><path d="M9.5 19.2c3-1.8 5-1.5 7.5-.3l-1.7 7.3c-2.5-1.2-4.5-1.4-7.5.3z" fill="#3a9ae0"/><path d="M18.5 19.5c2.5 1.2 5 1.2 8-.5l-1.7 7.3c-3 1.7-5.5 1.7-8 .5z" fill="#fcc419"/></g></svg>
<svg class="a" style="left:72px;top:763px" width="36" height="36" viewBox="0 0 36 36"><defs><radialGradient id="dsc" cx=".5" cy=".5" r=".5"><stop offset="0" stop-color="#e08a40"/><stop offset=".55" stop-color="#a04a18"/><stop offset=".75" stop-color="#c8c8cc"/><stop offset="1" stop-color="#f0f0f2"/></radialGradient></defs><circle cx="17" cy="17" r="15.5" fill="url(#dsc)" stroke="#7a7a80" stroke-width="1"/><path d="M12 8h6c5 0 8 4 8 9s-3 9-8 9h-6z" fill="#7a2a10" stroke="#f4e6dc" stroke-width="1.5"/><path d="M16 11h2c3 0 4.5 3 4.5 6s-1.5 6-4.5 6h-2z" fill="#c87838"/><rect x="18" y="20" width="15" height="14" fill="#e8e8e0" stroke="#666" stroke-width=".8"/><rect x="19.5" y="21.5" width="5.5" height="5" fill="#d03020"/><rect x="26" y="21.5" width="5.5" height="5" fill="#40a030"/><rect x="19.5" y="27.5" width="5.5" height="5" fill="#3050c0"/><rect x="26" y="27.5" width="5.5" height="5" fill="#e8c020"/></svg>
<svg class="a" style="left:134px;top:763px" width="36" height="36" viewBox="0 0 36 36"><defs><linearGradient id="ieg" x1="0" y1="0" x2="0" y2="1"><stop offset="0" stop-color="#6ec0f4"/><stop offset=".5" stop-color="#2a86dc"/><stop offset="1" stop-color="#0f4aa0"/></linearGradient></defs><text x="5" y="31" font-family="Liberation Sans,sans-serif" font-size="40" font-weight="700" fill="url(#ieg)" stroke="#0f4aa0" stroke-width=".5">e</text><ellipse cx="17" cy="18" rx="18" ry="6.5" fill="none" stroke="#f2bc28" stroke-width="2.2" transform="rotate(-40 17 18)" stroke-dasharray="70 18" stroke-dashoffset="-12"/></svg>
<svg class="a" style="left:196px;top:765px" width="34" height="33" viewBox="0 0 36 34" preserveAspectRatio="none"><path d="M2 6c0-2 1-3 3-3h8l2 3h16c2 0 3 1 3 3v18h-32z" fill="#f3dc8c" stroke="#c8a848" stroke-width="1"/><rect x="4" y="4" width="3" height="2" fill="#30a040"/><rect x="13" y="6" width="3" height="2" fill="#d03030"/><rect x="22" y="8" width="3" height="2" fill="#3080d0"/><path d="M2 11h32v17h-32z" fill="#fae9a8" stroke="#d0b050" stroke-width=".8"/><path d="M6 31v-11c0-2 1-3 3-3h18c2 0 3 1 3 3v11h-6v-7h-12v7z" fill="#8cd0f0" stroke="#4a9ac8" stroke-width="1"/><path d="M9 19.5h18" stroke="#d8f0fc" stroke-width="2"/></svg>
<svg class="a" style="left:258px;top:766px" width="34" height="32" viewBox="0 0 34 32"><rect x="6" y="3" width="24" height="24" fill="#a8d0ec" stroke="#6aa0c8" stroke-width=".8"/><rect x="3" y="4" width="24" height="25" fill="#c4e0f4" stroke="#6aa0c8" stroke-width=".8"/><circle cx="14" cy="16.5" r="9.5" fill="#f08018" stroke="#c05a08" stroke-width="1"/><path d="M11 11l9 5.5-9 5.5z" fill="#fff"/></svg>
<svg class="a" style="left:318px;top:763px" width="36" height="36" viewBox="0 0 36 36"><path d="M10 3l22 2-2 22-20-3z" fill="#d0d4dc" stroke="#8a90a0" stroke-width="1"/><path d="M13 5.5l17 1.5-1.8 18-15.2-2.5z" fill="#1838c8"/><path d="M22 6.3l8 .7-1.8 18-6.2-1z" fill="#5a80e8"/><ellipse cx="22" cy="31" rx="9" ry="3" fill="#b8bcc4" stroke="#8a90a0" stroke-width=".8"/><circle cx="12" cy="18" r="7.5" fill="#b8d0e8" fill-opacity=".85" stroke="#6a7078" stroke-width="2"/><path d="M17 24l8 9" stroke="#8a5a28" stroke-width="3.5" stroke-linecap="round"/></svg>
<svg class="a" style="left:382px;top:763px" width="36" height="36" viewBox="0 0 36 36"><ellipse cx="14" cy="20" rx="12" ry="7" fill="#e8e8ec" stroke="#d04848" stroke-width="1.5"/><ellipse cx="16" cy="11" rx="13" ry="8" fill="#f6f6f8" stroke="#d03838" stroke-width="2"/><path d="M12 4l10 20M22 6l-7 16" stroke="#5a5a60" stroke-width="2"/><circle cx="24" cy="28" r="4" fill="none" stroke="#2a80d0" stroke-width="2.5"/><circle cx="30" cy="21" r="4" fill="none" stroke="#2a80d0" stroke-width="2.5" transform="rotate(20 30 21)"/></svg>
<svg class="a" style="left:444px;top:763px" width="36" height="36" viewBox="0 0 36 36"><path d="M3 18c0-10 5-14 15-14h15v16c0 9-6 14-15 14h-15z" fill="#7ac8d0" stroke="#4a98a4" stroke-width="1"/><circle cx="17" cy="20" r="11" fill="#fff"/><circle cx="17" cy="20" r="6.5" fill="#2aa0c0"/><circle cx="17" cy="20" r="2.5" fill="#106880"/></svg>
<div class="t" style='left:507px;top:767px;font-size:15px;font-weight:700;color:#e01020;font-family:"DejaVu Sans",sans-serif;transform:scaleX(0.735);transform-origin:0 0'>MAX</div>
<div class="t" style='left:506px;top:782px;font-size:15px;font-weight:700;color:#e01020;font-family:"DejaVu Sans",sans-serif;transform:scaleX(0.707);transform-origin:0 0'>PACK</div>
<svg class="a" style="left:568px;top:764px" width="36" height="34" viewBox="0 0 36 34"><rect x="3" y="2" width="28" height="20" rx="1.5" fill="#1a1a1e" stroke="#000"/><rect x="5" y="4" width="24" height="16" fill="#2a5a98"/><circle cx="21" cy="12" r="7" fill="#3a78c0" stroke="#9ac0e8" stroke-width=".8"/><path d="M9 5a9 9 0 0 0 0 14" fill="none" stroke="#9ac0e8" stroke-width="1"/><text x="21" y="14.5" font-family="Liberation Sans,sans-serif" font-size="6.5" font-weight="700" fill="#fff" text-anchor="middle">KMP</text><path d="M14 22h6v4h-6z" fill="#111"/><ellipse cx="17" cy="29" rx="9" ry="3.5" fill="#0a0a0a"/></svg>
<svg class="a" style="left:630px;top:763px" width="34" height="35" viewBox="0 0 34 35"><path d="M2 3c0-1 1-2 2-2h26l3 3v27c0 1-1 2-2 2h-27c-1 0-2-1-2-2z" fill="#1828c0" stroke="#0a1478" stroke-width="1"/><rect x="9" y="1.5" width="15" height="10" fill="#d8dce8"/><rect x="18" y="2.5" width="4" height="7.5" fill="#1828c0"/><rect x="5" y="15" width="24" height="17" fill="#fff"/><path d="M6 18.5h22M6 22h22M6 25.5h22M6 29h22" stroke="#d02020" stroke-width="1.6"/></svg>
<svg class="a" style="left:692px;top:764px" width="36" height="35" viewBox="0 0 36 35"><path d="M4 2h22l6 6v24h-28z" fill="#fff" stroke="#9ab0d0" stroke-width="1"/><path d="M26 2v6h6z" fill="#d0dcec"/><rect x="3" y="3" width="24" height="20" fill="#2458b0"/><text x="15" y="20" font-family="Liberation Sans,sans-serif" font-size="19" font-weight="700" fill="#fff" text-anchor="middle">W</text><path d="M14 24l16-4 3 9-15 5z" fill="#eef2f8" stroke="#a8b8d0" stroke-width=".8"/></svg>
<svg class="a" style="left:752px;top:764px" width="32" height="32" viewBox="0 0 36 36"><defs><linearGradient id="tag" x1="0" y1="0" x2="0" y2="1"><stop offset="0" stop-color="#7fa3c8"/><stop offset="1" stop-color="#3f6ea0"/></linearGradient></defs><rect x="1" y="1" width="34" height="34" rx="2" fill="#2f5c8c"/><rect x="18" y="2" width="16" height="16" fill="url(#tag)"/><path d="M4 4h12v4h-2v6h2v4h-12v-4h2v-6h-2z" fill="#fff"/><path d="M20 18h12v4h-2v6h2v4h-12v-4h2v-6h-2z" fill="#f0f0f0"/><path d="M16 8h6v10" fill="none" stroke="#dce6f2" stroke-width="1.2"/></svg>
<div class="t" style='left:1042px;top:772px;color:#fff;letter-spacing:-0.67px'>RU</div>
<svg class="a" style="left:1073px;top:778px" width="10" height="6" viewBox="0 0 10 6"><path d="M0 5.5h10l-5-5.5z" fill="#fff"/></svg>
<svg class="a" style="left:1094px;top:772px" width="17" height="17" viewBox="0 0 17 17"><path d="M2 1v15" stroke="#fff" stroke-width="2"/><path d="M1 1v15M3.5 1v15" stroke="#2a3448" stroke-width=".6"/><path d="M3.5 2.5c4-1.5 6 1.5 12 0c-1 3-3 6-5 6.5s-4-.5-7 .5z" fill="#fff" stroke="#2a3448" stroke-width=".8"/></svg>
<svg class="a" style="left:1118px;top:772px" width="17" height="17" viewBox="0 0 17 17"><path d="M2.5 2.5h7v12h-7z" fill="none" stroke="#fff" stroke-width="1.8"/><path d="M4 1h4" stroke="#fff" stroke-width="1.5"/><path d="M8 5h7v3c0 2-1 3-3.5 3s-3.5-1-3.5-3z" fill="#fff" stroke="#2a3448" stroke-width=".8"/><path d="M9.5 2.5v3M13 2.5v3M11.5 11v3h-3" stroke="#fff" stroke-width="1.5" fill="none"/></svg>
<svg class="a" style="left:1142px;top:772px" width="17" height="17" viewBox="0 0 17 17"><rect x="1" y="11" width="2.5" height="3" fill="#dfe6f0"/><rect x="4.5" y="9" width="2.5" height="5" fill="#dfe6f0"/><rect x="8" y="6" width="2.5" height="8" fill="#dfe6f0"/><rect x="11.5" y="2" width="2.5" height="12" fill="#dfe6f0"/><path d="M8 8l7 7M15 8l-7 7" stroke="#e01010" stroke-width="2.2"/></svg>
<svg class="a" style="left:1166px;top:772px" width="18" height="17" viewBox="0 0 18 17"><path d="M1 6h3l4-4v13l-4-4h-3z" fill="#fff" stroke="#2a3448" stroke-width=".7"/><path d="M10.5 5.5c1.5 2 1.5 4 0 6M13 3.5c2.5 3 2.5 7 0 10" fill="none" stroke="#fff" stroke-width="1.3"/></svg>
<div class="t" style='left:1214px;top:768px;color:#fff;letter-spacing:-0.61px'>21:00</div>
<div class="t" style='left:1200px;top:784px;color:#fff;letter-spacing:-0.61px'>19.08.2013</div>
<!-- DIALOG -->
<div class="a" id="dlg" style="left:291px;top:79px;width:698px;height:602px;border:1px solid #0a0a0a;border-radius:7px 7px 1px 1px;background:linear-gradient(#98b6d7 0,#a9c4e1 14px,#bdd3ea 29px,#b9d1ea 30px,#b9d1ea 100%);box-shadow:inset 0 0 0 1px rgba(225,240,252,.85)"></div>
<div class="a" id="client" style="left:299px;top:109px;width:682px;height:562px;background:#f0f0f0"></div>
<svg class="a" style="left:302px;top:90px" width="15" height="14" viewBox="0 0 15 14"><rect x="6.5" y=".5" width="7" height="7" fill="#f8d048" stroke="#c89818" stroke-width="1"/><rect x=".8" y="4.8" width="4" height="5" fill="#d82818" stroke="#8a1008" stroke-width=".8"/><rect x="6.5" y="9.5" width="5" height="3.5" fill="#5a98e8" stroke="#a8c8f0" stroke-width=".8"/><path d="M.5 13.5h5M.5 .5v3" stroke="#c0c8d4" stroke-width=".7"/></svg>
<div class="t" style='left:321px;top:93px;color:#14081e;letter-spacing:0.05px'>Выбор переменной</div>
<div class="a" style="left:882px;top:89px;width:31px;height:17px;border:1px solid #56698a;border-radius:3px;background:linear-gradient(#c9daee 0,#b8cee8 48%,#9dbad9 52%,#b2cbe6 100%);box-shadow:inset 0 0 0 1px rgba(255,255,255,.5)"></div>
<div class="a" style="left:915px;top:89px;width:31px;height:17px;border:1px solid #56698a;border-radius:3px;background:linear-gradient(#c9daee 0,#b8cee8 48%,#9dbad9 52%,#b2cbe6 100%);box-shadow:inset 0 0 0 1px rgba(255,255,255,.5)"></div>
<div class="a" style="left:948px;top:89px;width:31px;height:17px;border:1px solid #5a1a1c;border-radius:3px;background:linear-gradient(#e9b0a0 0,#dc8a76 48%,#c4452c 52%,#d4694c 100%);box-shadow:inset 0 0 0 1px rgba(255,255,255,.35)"></div>
<div class="a" style="left:892px;top:97px;width:11px;height:5px;background:#f4f6fa;border:1px solid #4a566c;border-radius:1px"></div>
<div class="a" style="left:925px;top:93px;width:11px;height:9px;background:#f4f6fa;border:1px solid #4a566c;border-radius:1px"></div>
<div class="a" style="left:928px;top:96px;width:5px;height:3px;background:#a9c0de;border:1px solid #4a566c"></div>
<svg class="a" style="left:957px;top:92px" width="13" height="11" viewBox="0 0 13 11"><path d="M.5 .5h4l2 2.3 2-2.3h4l-3.9 4.7 3.9 4.7h-4l-2-2.3-2 2.3h-4l3.9-4.7z" fill="#fff" stroke="#5a3030" stroke-width="1"/></svg>
<div class="a" style="left:306px;top:130px;width:155px;height:37px;border:1px solid #d5dfe5;border-radius:3px"></div><div class="a" style="left:313px;top:129px;width:25px;height:3px;background:#f0f0f0"></div>
<div class="t" style='left:315px;top:126px;font-size:11px;color:#1a0a24;letter-spacing:-0.15px'>Имя</div>
<div class="a" style="left:467px;top:130px;width:156px;height:37px;border:1px solid #d5dfe5;border-radius:3px"></div><div class="a" style="left:474px;top:129px;width:22px;height:3px;background:#f0f0f0"></div>
<div class="t" style='left:477px;top:126px;font-size:11px;color:#1a0a24;letter-spacing:-0.11px'>Тип</div>
<div class="a" style="left:630px;top:130px;width:161px;height:37px;border:1px solid #d5dfe5;border-radius:3px"></div><div class="a" style="left:637px;top:129px;width:121px;height:3px;background:#f0f0f0"></div>
<div class="t" style='left:640px;top:126px;font-size:11px;color:#1a0a24;letter-spacing:-0.05px'>Глобальная видимость</div>
<div class="a" style="left:798px;top:130px;width:159px;height:37px;border:1px solid #d5dfe5;border-radius:3px"></div><div class="a" style="left:805px;top:129px;width:117px;height:3px;background:#f0f0f0"></div>
<div class="t" style='left:807px;top:126px;font-size:11px;color:#1a0a24;letter-spacing:0.03px'>Локальная видимость</div>
<div class="a white" style="left:316px;top:139px;width:136px;height:20px;border:1px solid #5c9ddb;border-radius:2px;box-shadow:inset 0 1px 0 #3d7bad"></div>
<div class="a" style="left:319px;top:142px;width:14px;height:13px;background:#3399ff"></div>
<div class="t" style='left:320px;top:143px;font-size:11px;color:#fff;letter-spacing:-0.48px'>X1</div>
<div class="a white" style="left:477px;top:139px;width:137px;height:21px;border:1px solid #e2e3ea;border-top-color:#abadb3;border-radius:2px"></div><svg class="a" style="left:602px;top:148px" width="8" height="5" viewBox="0 0 8 5"><path d="M0 0h8l-4 4.5z" fill="#111"/></svg>
<div class="t" style='left:480px;top:144px;font-size:11px;color:#14081e;letter-spacing:-0.39px'>BOOL</div>
<div class="a white" style="left:641px;top:139px;width:141px;height:21px;border:1px solid #e2e3ea;border-top-color:#abadb3;border-radius:2px"></div><svg class="a" style="left:770px;top:148px" width="8" height="5" viewBox="0 0 8 5"><path d="M0 0h8l-4 4.5z" fill="#111"/></svg>
<div class="t" style='left:644px;top:144px;font-size:11px;color:#14081e;letter-spacing:-0.47px'>Resource1</div>
<div class="a white" style="left:808px;top:139px;width:140px;height:21px;border:1px solid #e2e3ea;border-top-color:#abadb3;border-radius:2px"></div><svg class="a" style="left:936px;top:148px" width="8" height="5" viewBox="0 0 8 5"><path d="M0 0h8l-4 4.5z" fill="#111"/></svg>
<div class="t" style='left:811px;top:144px;font-size:11px;color:#14081e;letter-spacing:-0.42px'>GEN_FBD</div>
<div class="a" style="left:306px;top:203px;width:666px;height:418px;border:1px solid #898c95;background:#fff"></div>
<div class="a" style="left:307px;top:185px;width:205px;height:18px;border:1px solid #898c95;border-bottom:none;background:linear-gradient(#f2f2f2 0,#ebebeb 50%,#dddddd 51%,#cfcfcf 100%)"></div>
<div class="t" style='left:314px;top:190px;font-size:11px;color:#14081e;letter-spacing:-0.11px'>Глобальные переменные  - Resource1</div>
<div class="a" style="left:709px;top:185px;width:198px;height:18px;border:1px solid #898c95;border-bottom:none;background:linear-gradient(#f2f2f2 0,#ebebeb 50%,#dddddd 51%,#cfcfcf 100%)"></div>
<div class="t" style='left:714px;top:190px;font-size:11px;color:#14081e;letter-spacing:-0.08px'>Системные переменные - Resource1</div>
<div class="a" style="left:906px;top:185px;width:34px;height:18px;border:1px solid #898c95;border-bottom:none;background:linear-gradient(#f2f2f2 0,#ebebeb 50%,#dddddd 51%,#cfcfcf 100%)"></div>
<div class="t" style='left:913px;top:190px;font-size:11px;color:#14081e;width:27px;overflow:hidden'>Переменные</div>
<div class="a" style="left:511px;top:183px;width:198px;height:22px;border:1px solid #898c95;border-bottom:none;background:#fff"></div>
<div class="t" style='left:519px;top:188px;font-size:11px;color:#14081e;letter-spacing:-0.06px'>Локальные переменные - GEN_FBD</div>
<div class="a" style="left:940px;top:184px;width:33px;height:18px;background:#f6f6f6"></div>
<div class="a" style="left:941px;top:185px;width:15px;height:16px;border:1px solid #b4b7c0;background:linear-gradient(#f6f6f6 0,#efefef 50%,#e0e0e0 52%,#d8d8d8 100%)"></div>
<svg class="a" style="left:946px;top:190px" width="5" height="6" viewBox="0 0 5 6"><path d="M4 0v6l-3.5-3z" fill="#4a5aa8"/></svg>
<div class="a" style="left:957px;top:185px;width:15px;height:16px;border:1px solid #b4b7c0;background:linear-gradient(#f6f6f6 0,#efefef 50%,#e0e0e0 52%,#d8d8d8 100%)"></div>
<svg class="a" style="left:962px;top:190px" width="5" height="6" viewBox="0 0 5 6"><path d="M1 0v6l3.5-3z" fill="#4a5aa8"/></svg>
<div class="a white" style="left:310px;top:205px;width:661px;height:413px;border:1px solid #6a6a6a;border-right-color:#fafafa;border-bottom-color:#fafafa"></div>
<div class="a" style="left:313px;top:208px;width:17px;height:20px;background:#007cc3"></div>
<div class="a" style="left:331px;top:208px;width:61px;height:20px;background:#007cc3"></div>
<div class="a" style="left:393px;top:208px;width:107px;height:20px;background:#007cc3"></div>
<div class="a" style="left:502px;top:208px;width:89px;height:20px;background:#007cc3"></div>
<div class="a" style="left:593px;top:208px;width:51px;height:20px;background:#007cc3"></div>
<div class="a" style="left:646px;top:208px;width:322px;height:20px;background:#007cc3"></div>
<div class="t" style='left:351px;top:213px;font-size:11px;font-weight:700;color:#fff;letter-spacing:0.84px'>Имя</div>
<div class="t" style='left:416px;top:213px;font-size:11px;font-weight:700;color:#fff;letter-spacing:0.13px'>Тип данных</div>
<div class="t" style='left:511px;top:213px;font-size:11px;font-weight:700;color:#fff;letter-spacing:0.44px'>Размерность</div>
<div class="t" style='left:603px;top:213px;font-size:11px;font-weight:700;color:#fff;letter-spacing:0.41px'>Алиас</div>
<div class="t" style='left:858px;top:213px;font-size:11px;font-weight:700;color:#fff;letter-spacing:0.45px'>Комментарий</div>
<div class="a" style="left:313px;top:230px;width:17px;height:16px;background:#007cc3"></div>
<div class="a" style="left:331px;top:230px;width:61px;height:16px;background:#b7dceb"></div>
<div class="a" style="left:393px;top:230px;width:107px;height:16px;background:#b7dceb"></div>
<div class="a" style="left:502px;top:230px;width:89px;height:16px;background:#b7dceb"></div>
<div class="a" style="left:593px;top:230px;width:51px;height:16px;background:#b7dceb"></div>
<div class="a" style="left:646px;top:230px;width:322px;height:16px;background:#b7dceb"></div>
<div class="a" style="left:375px;top:231px;width:16px;height:14px;border:1px solid #dfeaf6;border-radius:2px;background:linear-gradient(#e4ecf8,#b9cce8)"></div>
<div class="t" style='left:377px;top:232px;font-size:11px;font-weight:700;color:#101028;font-family:"Liberation Serif",sans-serif;font-style:italic'>A</div>
<div class="t" style='left:385px;top:230px;font-size:9px;font-weight:700;color:#101028'>*</div>
<svg class="a" style="left:362px;top:237px" width="6" height="4" viewBox="0 0 6 4"><path d="M0 0h6l-3 3.5z" fill="#5a78b0"/></svg>
<div class="a" style="left:575px;top:231px;width:16px;height:14px;border:1px solid #dfeaf6;border-radius:2px;background:linear-gradient(#e4ecf8,#b9cce8)"></div>
<div class="t" style='left:577px;top:232px;font-size:11px;font-weight:700;color:#101028;font-family:"Liberation Serif",sans-serif;font-style:italic'>A</div>
<div class="t" style='left:585px;top:230px;font-size:9px;font-weight:700;color:#101028'>*</div>
<svg class="a" style="left:562px;top:237px" width="6" height="4" viewBox="0 0 6 4"><path d="M0 0h6l-3 3.5z" fill="#5a78b0"/></svg>
<div class="a" style="left:628px;top:231px;width:16px;height:14px;border:1px solid #dfeaf6;border-radius:2px;background:linear-gradient(#e4ecf8,#b9cce8)"></div>
<div class="t" style='left:630px;top:232px;font-size:11px;font-weight:700;color:#101028;font-family:"Liberation Serif",sans-serif;font-style:italic'>A</div>
<div class="t" style='left:638px;top:230px;font-size:9px;font-weight:700;color:#101028'>*</div>
<svg class="a" style="left:615px;top:237px" width="6" height="4" viewBox="0 0 6 4"><path d="M0 0h6l-3 3.5z" fill="#5a78b0"/></svg>
<div class="a" style="left:484px;top:231px;width:16px;height:14px;border:1px solid #dfeaf6;border-radius:2px;background:linear-gradient(#e4ecf8,#b9cce8)"></div>
<div class="t" style='left:485px;top:233px;font-size:10px;font-weight:700;color:#1a2ad0;letter-spacing:0.66px;font-style:italic'>==</div>
<svg class="a" style="left:472px;top:237px" width="6" height="4" viewBox="0 0 6 4"><path d="M0 0h6l-3 3.5z" fill="#5a78b0"/></svg>
<div class="t" style='left:413px;top:233px;font-size:11px;color:#14081e;letter-spacing:-0.39px'>BOOL</div>
<div class="a" style="left:313px;top:248px;width:17px;height:16px;background:#007cc3"></div>
<div class="a" style="left:331px;top:248px;width:16px;height:16px;background:#c4d4ea"></div>
<div class="a" style="left:349px;top:248px;width:43px;height:16px;background:#c4d4ea;border:1px dashed #555"></div>
<div class="a" style="left:393px;top:248px;width:107px;height:16px;background:#3399ff"></div>
<div class="a" style="left:502px;top:248px;width:89px;height:16px;background:#3399ff"></div>
<div class="a" style="left:593px;top:248px;width:51px;height:16px;background:#3399ff"></div>
<div class="a" style="left:646px;top:248px;width:322px;height:16px;background:#3399ff"></div>
<div class="t" style='left:352px;top:251px;font-size:11px;color:#14081e;letter-spacing:-0.48px'>X1</div>
<div class="t" style='left:396px;top:251px;font-size:11px;color:#fff;letter-spacing:-0.52px'>BOOL</div>
<svg class="a" style="left:488px;top:255px" width="6" height="4" viewBox="0 0 6 4"><path d="M0 0h6l-3 3.5z" fill="#d4e4f8"/></svg>
<div class="a" style="left:313px;top:266px;width:17px;height:16px;background:#007cc3"></div>
<div class="t" style='left:352px;top:269px;font-size:11px;color:#14081e;letter-spacing:-0.48px'>X2</div>
<div class="t" style='left:396px;top:269px;font-size:11px;letter-spacing:-0.52px'>BOOL</div>
<svg class="a" style="left:488px;top:273px" width="6" height="4" viewBox="0 0 6 4"><path d="M0 0h6l-3 3.5z" fill="#5a78b0"/></svg>
<div class="a" style="left:313px;top:284px;width:17px;height:16px;background:#007cc3"></div>
<div class="a" style="left:331px;top:284px;width:16px;height:16px;background:#c4d4ea"></div>
<div class="a" style="left:349px;top:284px;width:43px;height:16px;background:#c4d4ea"></div>
<div class="a" style="left:393px;top:284px;width:107px;height:16px;background:#c4d4ea"></div>
<div class="a" style="left:502px;top:284px;width:89px;height:16px;background:#c4d4ea"></div>
<div class="a" style="left:593px;top:284px;width:51px;height:16px;background:#c4d4ea"></div>
<div class="a" style="left:646px;top:284px;width:322px;height:16px;background:#c4d4ea"></div>
<div class="t" style='left:352px;top:287px;font-size:11px;color:#14081e;letter-spacing:-0.34px'>Y</div>
<div class="t" style='left:396px;top:287px;font-size:11px;letter-spacing:-0.52px'>BOOL</div>
<svg class="a" style="left:488px;top:291px" width="6" height="4" viewBox="0 0 6 4"><path d="M0 0h6l-3 3.5z" fill="#5a78b0"/></svg>
<div class="a" style="left:313px;top:302px;width:17px;height:16px;background:#007cc3"></div>
<div class="a" style="left:331px;top:302px;width:61px;height:16px;background:#b7dceb"></div>
<div class="a" style="left:393px;top:302px;width:107px;height:16px;background:#b7dceb"></div>
<div class="a" style="left:502px;top:302px;width:89px;height:16px;background:#b7dceb"></div>
<div class="a" style="left:593px;top:302px;width:51px;height:16px;background:#b7dceb"></div>
<div class="a" style="left:646px;top:302px;width:322px;height:16px;background:#b7dceb"></div>
<svg class="a" style="left:488px;top:309px" width="6" height="4" viewBox="0 0 6 4"><path d="M0 0h6l-3 3.5z" fill="#5a78b0"/></svg>
<svg class="a" style="left:317px;top:251px" width="8" height="10" viewBox="0 0 8 10"><path d="M0 0v10l7-5z" fill="#000"/></svg>
<svg class="a" style="left:316px;top:305px" width="10" height="10" viewBox="0 0 10 10"><path d="M5 0v10M0 5h10M1.5 1.5l7 7M8.5 1.5l-7 7" stroke="#000" stroke-width="1.2"/></svg>
<div class="a" style="left:312px;top:599px;width:656px;height:17px;background:#7a9ac5"></div>
<div class="a" style="left:330px;top:600px;width:277px;height:15px;border:1px solid #6a82b0;border-radius:2px;background:linear-gradient(#e6ebf3 0,#dfe5ef 45%,#ced7e6 50%,#d5dde9 100%)"></div>
<svg class="a" style="left:317px;top:603px" width="6" height="9" viewBox="0 0 6 9"><path d="M6 0v9l-6-4.5z" fill="#4a5f8c"/></svg>
<svg class="a" style="left:957px;top:603px" width="6" height="9" viewBox="0 0 6 9"><path d="M0 0v9l6-4.5z" fill="#4a5f8c"/></svg>
<svg class="a" style="left:463px;top:604px" width="8" height="8" viewBox="0 0 8 8"><path d="M.5 0v8M2.5 0v8M4.5 0v8M6.5 0v8" stroke="#7a88a8" stroke-width="1"/></svg>
<div class="a" style="left:819px;top:638px;width:73px;height:21px;border:1px solid #707070;border-radius:3px;background:linear-gradient(#f2f2f2 0,#ebebeb 48%,#dddddd 52%,#cfcfcf 100%);box-shadow:inset 0 0 0 1px rgba(255,255,255,.8)"></div>
<div class="t" style='left:846px;top:643px;font-size:11px;color:#14081e;letter-spacing:0.05px'>OK</div>
<div class="a" style="left:900px;top:638px;width:73px;height:21px;border:1px solid #707070;border-radius:3px;background:linear-gradient(#f2f2f2 0,#ebebeb 48%,#dddddd 52%,#cfcfcf 100%);box-shadow:inset 0 0 0 1px rgba(255,255,255,.8)"></div>
<div class="t" style='left:915px;top:643px;font-size:11px;color:#14081e;letter-spacing:-0.08px'>Отмена</div>
<svg class="a" style="left:971px;top:662px" width="9" height="9" viewBox="0 0 9 9"><path d="M7 1h1M5 3h1M7 3h1M3 5h1M5 5h1M7 5h1M1 7h1M3 7h1M5 7h1M7 7h1" stroke="#b8b8b8" stroke-width="1.5"/></svg>
</body></html>
